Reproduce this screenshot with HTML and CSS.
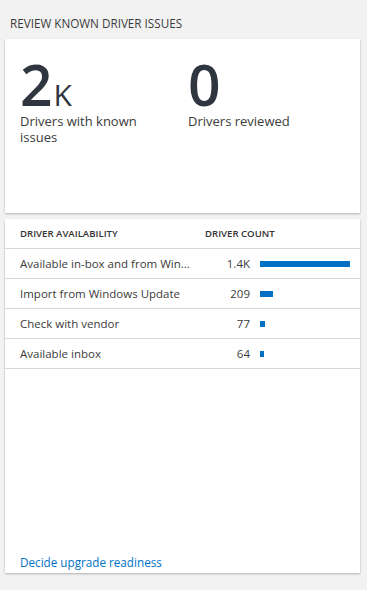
FILE: index.html
```html
<!DOCTYPE html>
<html>
<head>
<meta charset="utf-8">
<link rel="stylesheet" href="styles.css">
</head>
<body>
<div class="page">
  <h2 class="title">REVIEW KNOWN DRIVER ISSUES</h2>
  <div class="card kpis">
    <div class="kpi first">
      <div class="num">2<span class="unit">K</span></div>
      <div class="label">Drivers with known issues</div>
    </div>
    <div class="kpi">
      <div class="num">0</div>
      <div class="label">Drivers reviewed</div>
    </div>
  </div>
  <div class="card table-card">
    <div class="row head">
      <div class="c-name">DRIVER AVAILABILITY</div>
      <div class="c-count">DRIVER COUNT</div>
    </div>
    <div class="row">
      <div class="c-name">Available in-box and from Win...</div>
      <div class="c-num">1.4K</div>
      <div class="c-bar"><span class="bar" style="width:90px"></span></div>
    </div>
    <div class="row">
      <div class="c-name">Import from Windows Update</div>
      <div class="c-num">209</div>
      <div class="c-bar"><span class="bar" style="width:13px"></span></div>
    </div>
    <div class="row">
      <div class="c-name">Check with vendor</div>
      <div class="c-num">77</div>
      <div class="c-bar"><span class="bar" style="width:5px"></span></div>
    </div>
    <div class="row">
      <div class="c-name">Available inbox</div>
      <div class="c-num">64</div>
      <div class="c-bar"><span class="bar" style="width:4px"></span></div>
    </div>
    <div class="spacer"></div>
    <a class="link" href="#">Decide upgrade readiness</a>
  </div>
</div>
</body>
</html>
```

FILE: styles.css
```css
html, body {
  margin: 0;
  padding: 0;
  background: #f2f2f2;
}
body {
  font-family: "Open Sans", "Noto Sans", sans-serif;
  color: #333;
  width: 367px;
  height: 590px;
  overflow: hidden;
}
.page {
  padding: 15px 7px 0 5px;
  display: flex;
  flex-direction: column;
}
.title {
  margin: 0 0 8px 5px;
  font-size: 11.7px;
  font-weight: 400;
  color: #3b3b3b;
  line-height: 16px;
}
.card {
  background: #fff;
  box-shadow: 0 1px 2px rgba(0,0,0,0.28);
}
.kpis {
  height: 174px;
  display: flex;
  padding: 20px 15px 0 15px;
  box-sizing: border-box;
}
.kpi {
  flex: none;
}
.kpi.first {
  width: 168px;
}
.num {
  font-family: "Open Sans", sans-serif;
  font-size: 57px;
  font-weight: 600;
  line-height: 50px;
  color: #2f3640;
  letter-spacing: -1px;
}
.unit {
  font-size: 30px;
  font-weight: 400;
  line-height: 0;
  letter-spacing: 0;
  margin-left: 2px;
}
.label {
  font-size: 13px;
  line-height: 16px;
  color: #3b3b3b;
  margin-top: 4px;
  width: 130px;
}
.table-card {
  margin-top: 6px;
  height: 354px;
  display: flex;
  flex-direction: column;
}
.row {
  display: flex;
  align-items: center;
  height: 29px;
  border-bottom: 1px solid #d8d8d8;
  padding-left: 15px;
  font-size: 11.5px;
  color: #3b3b3b;
}
.row.head {
  height: 29px;
  font-size: 9.6px;
  font-weight: 600;
  color: #333;
}
.c-name {
  width: 185px;
  white-space: nowrap;
}
.c-num {
  width: 45px;
  text-align: right;
}
.c-bar {
  margin-left: 10px;
  display: flex;
  align-items: center;
}
.bar {
  display: block;
  height: 6px;
  background: #0072c6;
}
.spacer {
  flex: 1;
}
.link {
  padding: 0 0 3px 15px;
  font-size: 11.7px;
  color: #0072c6;
  text-decoration: none;
  line-height: 16px;
}
```
